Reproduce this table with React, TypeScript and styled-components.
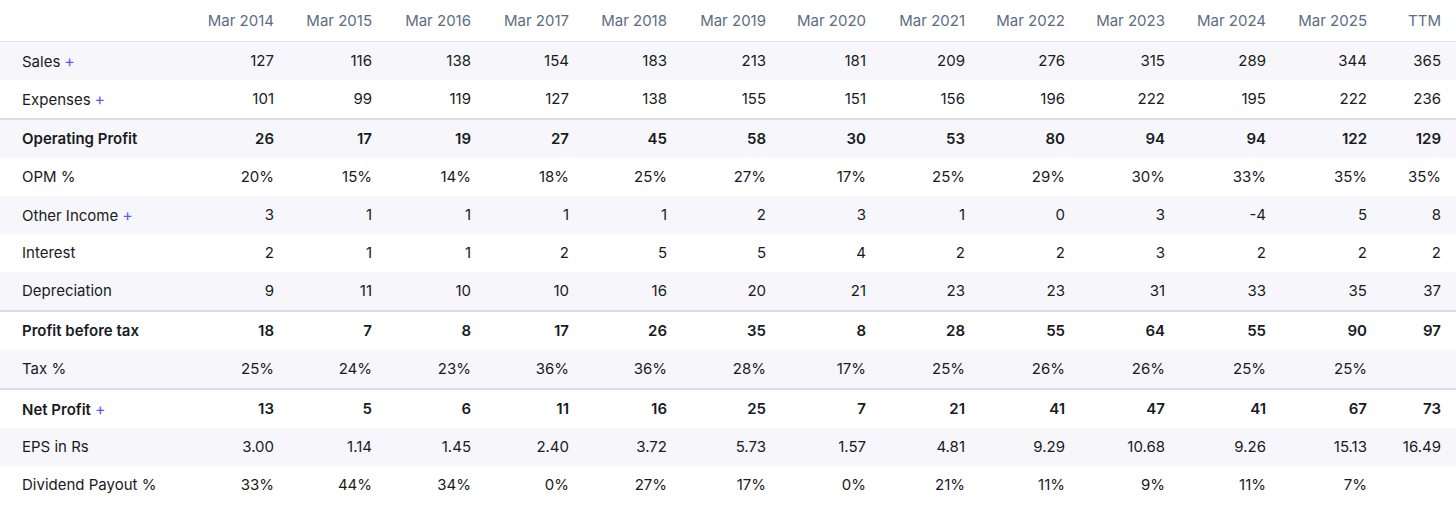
import React from "react";
import styled, { createGlobalStyle } from "styled-components";

const GlobalStyle = createGlobalStyle`
  html, body { margin: 0; padding: 0; background: #ffffff; }
  body { font-family: Inter, "Noto Sans", "Liberation Sans", sans-serif; color: #1f2328; }
`;

const Table = styled.table`
  width: 1456px;
  border-collapse: collapse;
  table-layout: fixed;
  font-size: 15px;
`;

const HeadCell = styled.th<{ $first?: boolean }>`
  height: 41px;
  padding: 0 15px 0 ${(p) => (p.$first ? "22px" : "0")};
  text-align: ${(p) => (p.$first ? "left" : "right")};
  font-weight: 400;
  color: #5c6d83;
  border-bottom: 1px solid #e1e6f0;
  line-height: 22px;
`;

const Row = styled.tr<{ $striped: boolean; $strong: boolean }>`
  background: ${(p) => (p.$striped ? "#f7f7fb" : "#ffffff")};
  border-top: ${(p) => (p.$strong ? "2px solid #d4deec" : "none")};
  font-weight: ${(p) => (p.$strong ? 600 : 400)};
`;

const LabelCell = styled.td`
  height: 38px;
  padding: 0 0 0 22px;
  text-align: left;
  white-space: nowrap;
  line-height: 22px;
  color: #181b21;
`;

const NumCell = styled.td`
  height: 38px;
  padding: 0 15px 0 0;
  text-align: right;
  white-space: nowrap;
  line-height: 22px;
  color: #181b21;
`;

const Plus = styled.span`
  color: #5b5cf0;
  margin-left: 4px;
  font-size: 16px;
  font-weight: 400;
`;

const colWidths = [191, 98, 98, 99, 98, 98, 99, 100, 99, 100, 100, 101, 101, 74];

const headers = [
  "Mar 2014", "Mar 2015", "Mar 2016", "Mar 2017", "Mar 2018", "Mar 2019",
  "Mar 2020", "Mar 2021", "Mar 2022", "Mar 2023", "Mar 2024", "Mar 2025", "TTM",
];

type RowData = { label: string; plus?: boolean; strong?: boolean; values: string[] };

const rows: RowData[] = [
  { label: "Sales", plus: true, values: ["127", "116", "138", "154", "183", "213", "181", "209", "276", "315", "289", "344", "365"] },
  { label: "Expenses", plus: true, values: ["101", "99", "119", "127", "138", "155", "151", "156", "196", "222", "195", "222", "236"] },
  { label: "Operating Profit", strong: true, values: ["26", "17", "19", "27", "45", "58", "30", "53", "80", "94", "94", "122", "129"] },
  { label: "OPM %", values: ["20%", "15%", "14%", "18%", "25%", "27%", "17%", "25%", "29%", "30%", "33%", "35%", "35%"] },
  { label: "Other Income", plus: true, values: ["3", "1", "1", "1", "1", "2", "3", "1", "0", "3", "-4", "5", "8"] },
  { label: "Interest", values: ["2", "1", "1", "2", "5", "5", "4", "2", "2", "3", "2", "2", "2"] },
  { label: "Depreciation", values: ["9", "11", "10", "10", "16", "20", "21", "23", "23", "31", "33", "35", "37"] },
  { label: "Profit before tax", strong: true, values: ["18", "7", "8", "17", "26", "35", "8", "28", "55", "64", "55", "90", "97"] },
  { label: "Tax %", values: ["25%", "24%", "23%", "36%", "36%", "28%", "17%", "25%", "26%", "26%", "25%", "25%", ""] },
  { label: "Net Profit", plus: true, strong: true, values: ["13", "5", "6", "11", "16", "25", "7", "21", "41", "47", "41", "67", "73"] },
  { label: "EPS in Rs", values: ["3.00", "1.14", "1.45", "2.40", "3.72", "5.73", "1.57", "4.81", "9.29", "10.68", "9.26", "15.13", "16.49"] },
  { label: "Dividend Payout %", values: ["33%", "44%", "34%", "0%", "27%", "17%", "0%", "21%", "11%", "9%", "11%", "7%", ""] },
];

export default function App() {
  return (
    <>
      <GlobalStyle />
      <Table>
        <colgroup>
          {colWidths.map((w, i) => (
            <col key={i} style={{ width: w }} />
          ))}
        </colgroup>
        <thead>
          <tr>
            <HeadCell $first />
            {headers.map((h) => (
              <HeadCell key={h}>{h}</HeadCell>
            ))}
          </tr>
        </thead>
        <tbody>
          {rows.map((r, i) => (
            <Row key={r.label} $striped={i % 2 === 0} $strong={!!r.strong}>
              <LabelCell>
                {r.label}
                {r.plus && <Plus>+</Plus>}
              </LabelCell>
              {r.values.map((v, j) => (
                <NumCell key={j}>{v}</NumCell>
              ))}
            </Row>
          ))}
        </tbody>
      </Table>
    </>
  );
}
